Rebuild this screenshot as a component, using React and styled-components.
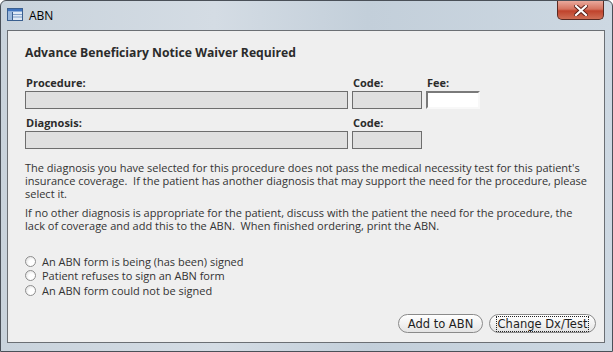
import React from 'react';
import styled, { createGlobalStyle } from 'styled-components';

const GlobalStyle = createGlobalStyle`
  html, body {
    margin: 0;
    padding: 0;
    background: #ffffff;
  }
  body {
    font-family: "Open Sans", "DejaVu Sans", sans-serif;
  }
`;

const Window = styled.div`
  width: 613px;
  height: 352px;
  box-sizing: border-box;
  display: flex;
  flex-direction: column;
  border: 1px solid #4a5058;
  border-radius: 6px 6px 0 0;
  background: linear-gradient(90deg, #c9d3dc 0%, #d4dce4 35%, #c3cfda 60%, #cdd8e2 100%);
  padding: 0 7px 8px 6px;
`;

const TitleBar = styled.div`
  height: 29px;
  display: flex;
  align-items: flex-start;
  flex-shrink: 0;
`;

const TitleIcon = styled.svg`
  width: 16px;
  height: 13px;
  margin: 7px 6px 0 0;
`;

const TitleText = styled.span`
  font-family: "Open Sans", sans-serif;
  font-size: 12px;
  color: #000;
  margin-top: 6px;
`;

const CloseButton = styled.div`
  margin-left: auto;
  margin-right: 1px;
  width: 47px;
  height: 19px;
  border: 1px solid #5a2a22;
  border-top: none;
  border-radius: 0 0 5px 5px;
  box-sizing: border-box;
  background: linear-gradient(180deg, #e9a99c 0%, #d5735f 45%, #c0432c 55%, #cf6e55 100%);
  display: flex;
  align-items: center;
  justify-content: center;
`;

const Client = styled.div`
  flex: 1;
  border: 1px solid #6b6f74;
  background: #efefef;
  padding: 11px 16px 0 17px;
  display: flex;
  flex-direction: column;
  color: #2e2e2e;
`;

const Heading = styled.div`
  font-size: 12.2px;
  font-weight: 700;
  color: #2b2b2b;
  height: 22px;
  line-height: 22px;
  margin-bottom: 12px;
`;

const FieldRow = styled.div`
  display: flex;
  gap: 4px;
  margin-bottom: ${(p) => p.$gap}px;
`;

const Field = styled.div`
  display: flex;
  flex-direction: column;
  width: ${(p) => p.$w}px;
`;

const Label = styled.div`
  font-size: 11px;
  font-weight: 700;
  color: #2b2b2b;
  height: 15px;
  line-height: 14px;
  padding-left: 1px;
`;

const Box = styled.div`
  height: 18px;
  box-sizing: border-box;
  border: 1px solid #6e6e6e;
  background: #e0e0e0;
`;

const EditBox = styled.div`
  height: 18px;
  box-sizing: border-box;
  border: 2px solid;
  border-color: #7a7a7a #f8f8f8 #f8f8f8 #7a7a7a;
  background: #ffffff;
`;

const Para = styled.p`
  margin: ${(p) => p.$top || 0}px 0 6px 0;
  font-size: 11px;
  line-height: 13px;
  color: #333;
`;

const RadioList = styled.div`
  margin-top: 16px;
  display: flex;
  flex-direction: column;
`;

const RadioRow = styled.label`
  display: flex;
  align-items: center;
  height: 14.5px;
  font-size: 11px;
  color: #333;
`;

const RadioCircle = styled.span`
  width: 11px;
  height: 11px;
  border-radius: 50%;
  box-sizing: border-box;
  border: 1px solid #8e8e8e;
  background: radial-gradient(circle at 65% 65%, #ffffff 35%, #d6d6d6 100%);
  margin: 0 6px 0 0;
`;

const ButtonBar = styled.div`
  margin-top: auto;
  margin-right: -8px;
  display: flex;
  justify-content: flex-end;
  gap: 6px;
  padding-bottom: 9px;
`;

const PillButton = styled.button`
  height: 19px;
  width: ${(p) => p.$w}px;
  padding: 0;
  border-radius: 10px;
  border: 1px solid #8a8a8a;
  background: linear-gradient(180deg, #ffffff 0%, #f2f2f2 50%, #e4e4e4 100%);
  font-family: "DejaVu Sans", sans-serif;
  font-size: 11.5px;
  color: #1e1e1e;
  display: flex;
  align-items: center;
  justify-content: center;
  cursor: pointer;
`;

const FocusText = styled.span`
  outline: ${(p) => (p.$focus ? '1px dotted #222' : 'none')};
  padding: 0 1px;
  line-height: 14px;
`;

export default function App() {
  return (
    <>
      <GlobalStyle />
      <Window>
        <TitleBar>
          <TitleIcon viewBox="0 0 16 13">
            <rect x="0.5" y="0.5" width="15" height="12" fill="#dfe9f5" stroke="#3a5f8f" />
            <rect x="1" y="1" width="14" height="2.5" fill="#3f74c0" />
            <rect x="1" y="4" width="4" height="8" fill="#9ab8dd" />
            <line x1="5.5" y1="4" x2="5.5" y2="12" stroke="#3a5f8f" />
            <line x1="6" y1="6.5" x2="15" y2="6.5" stroke="#7f9ec8" />
            <line x1="6" y1="9" x2="15" y2="9" stroke="#7f9ec8" />
          </TitleIcon>
          <TitleText>ABN</TitleText>
          <CloseButton>
            <svg width="14" height="11" viewBox="0 0 14 11">
              <path d="M2 1 L12 10 M12 1 L2 10" stroke="#5a2018" strokeWidth="4" strokeLinecap="square" />
              <path d="M2 1 L12 10 M12 1 L2 10" stroke="#ffffff" strokeWidth="2.2" strokeLinecap="square" />
            </svg>
          </CloseButton>
        </TitleBar>
        <Client>
          <Heading>Advance Beneficiary Notice Waiver Required</Heading>
          <FieldRow $gap={7}>
            <Field $w={323}>
              <Label>Procedure:</Label>
              <Box />
            </Field>
            <Field $w={70}>
              <Label>Code:</Label>
              <Box />
            </Field>
            <Field $w={54}>
              <Label>Fee:</Label>
              <EditBox />
            </Field>
          </FieldRow>
          <FieldRow $gap={0}>
            <Field $w={323}>
              <Label>Diagnosis:</Label>
              <Box />
            </Field>
            <Field $w={70}>
              <Label>Code:</Label>
              <Box />
            </Field>
          </FieldRow>
          <Para $top={12}>
            The diagnosis you have selected for this procedure does not pass the medical necessity test for this patient's
            insurance coverage.&nbsp; If the patient has another diagnosis that may support the need for the procedure, please
            select it.
          </Para>
          <Para>
            If no other diagnosis is appropriate for the patient, discuss with the patient the need for the procedure, the
            lack of coverage and add this to the ABN.&nbsp; When finished ordering, print the ABN.
          </Para>
          <RadioList>
            <RadioRow><RadioCircle />An ABN form is being (has been) signed</RadioRow>
            <RadioRow><RadioCircle />Patient refuses to sign an ABN form</RadioRow>
            <RadioRow><RadioCircle />An ABN form could not be signed</RadioRow>
          </RadioList>
          <ButtonBar>
            <PillButton $w={85}><FocusText>Add to ABN</FocusText></PillButton>
            <PillButton $w={107}><FocusText $focus>Change Dx/Test</FocusText></PillButton>
          </ButtonBar>
        </Client>
      </Window>
    </>
  );
}
